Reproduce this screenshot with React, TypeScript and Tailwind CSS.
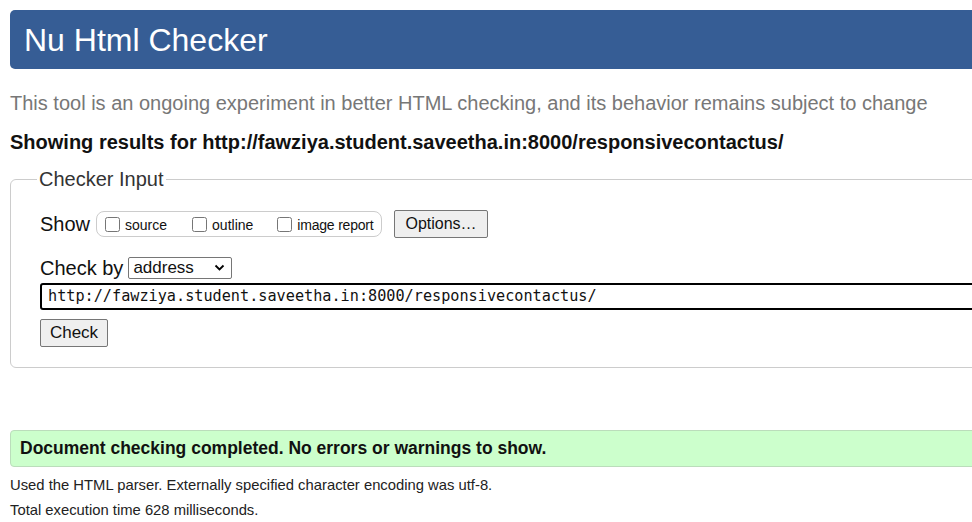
export default function App() {
  return (
    <div className="overflow-hidden bg-white font-['Liberation_Sans',Arial,sans-serif] text-[#111]">
      <div className="w-[1010px] pl-[10px] pt-[10px]">
        {/* Header */}
        <h1 className="flex h-[59px] items-center rounded-l-[5px] bg-[#365d95] pl-[14px] text-[32px] leading-none text-white">
          Nu Html Checker
        </h1>

        <p className="mt-[22px] text-[20px] leading-[24px] text-[#777]">
          This tool is an ongoing experiment in better HTML checking, and its
          behavior remains subject to change
        </p>
        <p className="mt-[15px] text-[20px] font-bold leading-[24px]">
          Showing results for
          http://fawziya.student.saveetha.in:8000/responsivecontactus/
        </p>

        {/* Checker input */}
        <fieldset className="mt-[13px] h-[201px] rounded-l-[6px] border border-[#ccc] pl-[29px]">
          <legend className="-ml-[3px] px-[2px] text-[20px] leading-[24px] text-[#333]">
            Checker Input
          </legend>

          <div className="mt-[19px] flex h-[28px] items-center">
            <span className="text-[20px] leading-[24px]">Show</span>
            <div className="ml-[6px] flex h-[26px] w-[286px] items-center rounded-[8px] border border-[#ccc] pl-[8px] text-[14px]">
              <label className="flex items-center">
                <input type="checkbox" className="m-0 h-[15px] w-[15px]" />
                <span className="ml-[5px] mt-[2px]">source</span>
              </label>
              <label className="ml-[25px] flex items-center">
                <input type="checkbox" className="m-0 h-[15px] w-[15px]" />
                <span className="ml-[5px] mt-[2px]">outline</span>
              </label>
              <label className="ml-[24px] flex items-center">
                <input type="checkbox" className="m-0 h-[15px] w-[15px]" />
                <span className="ml-[5px] mt-[2px] tracking-[-0.2px]">image report</span>
              </label>
            </div>
            <button className="ml-[12px] h-[28px] w-[94px] rounded-[2px] border border-[#767676] bg-[#efefef] text-[16px]">
              Options…
            </button>
          </div>

          <div className="mt-[18px] flex h-[24px] items-center">
            <span className="text-[20px] leading-[24px]">Check by</span>
            <div className="ml-[5px] flex h-[22px] w-[104px] items-center justify-between rounded-[2px] border border-[#767676] pl-[4px] pr-[6px] text-[17px]">
              <span>address</span>
              <svg width="11" height="8" viewBox="0 0 11 8" className="text-black">
                <path d="M1.5 1.5 L5.5 5.5 L9.5 1.5" fill="none" stroke="currentColor" strokeWidth="1.8" />
              </svg>
            </div>
          </div>

          <div className="mt-[3px] flex h-[27px] items-center rounded-l-[3px] border-2 border-black pl-[6px] font-['DejaVu_Sans_Mono',monospace] text-[15.2px]">
            http://fawziya.student.saveetha.in:8000/responsivecontactus/
          </div>

          <button className="mt-[9px] h-[28px] w-[68px] rounded-[2px] border border-[#767676] bg-[#efefef] text-[17px]">
            Check
          </button>
        </fieldset>

        {/* Result */}
        <div className="mt-[62px] flex h-[37px] items-center rounded-l-[4px] border border-[#bdb] bg-[#ccffcc] pl-[9px] text-[17.5px] font-bold">
          Document checking completed. No errors or warnings to show.
        </div>
        <p className="mt-[9px] text-[14.8px] leading-[18px] text-[#222]">
          Used the HTML parser. Externally specified character encoding was
          utf-8.
        </p>
        <p className="mt-[7px] text-[14.8px] leading-[18px] text-[#222]">
          Total execution time 628 milliseconds.
        </p>
      </div>
    </div>
  )
}
